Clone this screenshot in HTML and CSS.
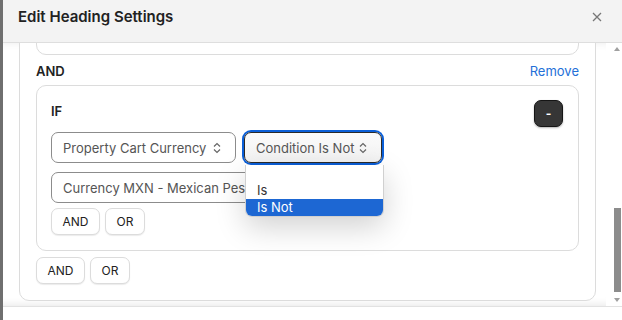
FILE: index.html
```html
<!DOCTYPE html>
<html>
  <head>
    <title>Edit Heading Settings</title>
    <link rel="stylesheet" href="styles.css">
  </head>
  <body>
    <div class="modal">
      <div class="modal-header">
        <h2 class="modal-title">Edit Heading Settings</h2>
        <button class="close-btn" aria-label="Close">
          <svg width="10" height="10" viewBox="0 0 10 10"><path d="M1 1L9 9M9 1L1 9" stroke="#777" stroke-width="1.3" fill="none"/></svg>
        </button>
      </div>

      <div class="modal-body">
        <div class="scroll-area">
          <div class="rule-group">
            <div class="prev-card"></div>

            <div class="group-head">
              <span class="label">AND</span>
              <a class="link">Remove</a>
            </div>

            <div class="condition-card">
              <div class="cond-head">
                <span class="label if-label">IF</span>
                <button class="btn-dark">-</button>
              </div>

              <div class="field-row">
                <div class="select select-property">
                  <span class="select-text">Property Cart Currency</span>
                  <svg class="chevron" width="8" height="12" viewBox="0 0 8 12"><path d="M1 4.5L4 1.5L7 4.5M1 7.5L4 10.5L7 7.5" stroke="#666" stroke-width="1.2" fill="none"/></svg>
                </div>
                <div class="select select-condition is-open">
                  <span class="select-text">Condition Is Not</span>
                  <svg class="chevron" width="8" height="12" viewBox="0 0 8 12"><path d="M1 4.5L4 1.5L7 4.5M1 7.5L4 10.5L7 7.5" stroke="#666" stroke-width="1.2" fill="none"/></svg>
                  <div class="dropdown">
                    <div class="option"></div>
                    <div class="option">Is</div>
                    <div class="option selected">Is Not</div>
                  </div>
                </div>
              </div>

              <div class="field-row">
                <div class="select select-value">
                  <span class="select-text">Currency MXN - Mexican Peso</span>
                </div>
              </div>

              <div class="btn-row">
                <button class="button">AND</button>
                <button class="button">OR</button>
              </div>
            </div>

            <div class="btn-row outer-row">
              <button class="button">AND</button>
              <button class="button">OR</button>
            </div>
          </div>
        </div>

        <div class="scrollbar">
          <span class="arrow up"></span>
          <div class="thumb"></div>
          <span class="arrow down"></span>
        </div>
      </div>

      <div class="modal-footer"></div>
    </div>
  </body>
</html>
```

FILE: styles.css
```css
:root {
  --border: #dcdcdc;
  --text-primary: #222222;
  --text-secondary: #555555;
  --link: #2470d8;
  --focus: #0b5fd8;
  --highlight: #1d67d3;
}

html, body {
  margin: 0;
  height: 320px;
  overflow: hidden;
}

body {
  background: #6f6f6f;
  font-family: 'Inter', sans-serif;
  color: var(--text-primary);
}

.modal {
  margin-left: 3px;
  height: 320px;
  background: #ffffff;
  display: flex;
  flex-direction: column;
}

.modal-header {
  height: 43px;
  box-sizing: border-box;
  flex: none;
  display: flex;
  align-items: flex-start;
  justify-content: space-between;
  padding: 8px 20px 0 15px;
  background: #f3f3f3;
  border-bottom: 1px solid #dedede;
}

.modal-title {
  margin: 0;
  font-size: 15px;
  line-height: 18px;
  font-weight: 600;
  color: var(--text-primary);
}

.close-btn {
  border: none;
  background: none;
  padding: 0;
  margin-top: 4px;
  display: flex;
  cursor: pointer;
}

.modal-body {
  height: 263px;
  flex: none;
  display: flex;
}

.scroll-area {
  flex: 1;
  overflow: hidden;
  padding: 0 10px 0 16px;
  box-shadow: inset 0 8px 8px -8px rgba(0, 0, 0, 0.08), inset 0 -10px 10px -10px rgba(0, 0, 0, 0.12);
}

.rule-group {
  margin-top: -42px;
  padding: 16px;
  border: 1px solid var(--border);
  border-radius: 10px;
  background: #ffffff;
}

.prev-card {
  height: 35px;
  border: 1px solid var(--border);
  border-radius: 10px;
}

.group-head {
  display: flex;
  justify-content: space-between;
  align-items: center;
  margin: 8px 0 6px;
  line-height: 16px;
}

.label {
  font-size: 13px;
  font-weight: 600;
}

.link {
  font-size: 13px;
  color: var(--link);
  cursor: pointer;
}

.condition-card {
  border: 1px solid var(--border);
  border-radius: 10px;
  padding: 14px 15px 15px 14px;
}

.cond-head {
  display: flex;
  justify-content: space-between;
  align-items: flex-start;
}

.if-label {
  padding-top: 3px;
  line-height: 16px;
}

.btn-dark {
  width: 29px;
  height: 27px;
  border-radius: 7px;
  border: 1px solid #151515;
  background: #363636;
  color: #ffffff;
  font-family: 'Inter', sans-serif;
  font-size: 12px;
  font-weight: 700;
  padding: 0;
  box-shadow: 0 1px 2px rgba(0, 0, 0, 0.3);
}

.field-row {
  display: flex;
  gap: 8px;
  margin-top: 5px;
}

.field-row + .field-row {
  margin-top: 9px;
}

.select {
  position: relative;
  height: 31px;
  box-sizing: border-box;
  display: flex;
  align-items: center;
  justify-content: space-between;
  padding: 0 14px 0 11px;
  border: 1px solid #8c8c8c;
  border-radius: 7px;
  background: #ffffff;
  font-size: 13px;
  color: var(--text-secondary);
  white-space: nowrap;
}

.select-property {
  width: 185px;
}

.select-condition {
  width: 138px;
  border-color: #2a2a2a;
  background: linear-gradient(#fbfbfb, #f2f2f2);
  box-shadow: 0 0 0 2px var(--focus);
}

.select-value {
  width: 300px;
}

.dropdown {
  position: absolute;
  top: 32px;
  left: 0;
  width: 137px;
  background: #ffffff;
  border: 1px solid #d0d0d0;
  border-top: none;
  border-radius: 0 0 7px 7px;
  overflow: hidden;
  box-shadow: 0 10px 30px rgba(0, 0, 0, 0.18);
  z-index: 2;
}

.option {
  height: 17px;
  line-height: 17px;
  padding-left: 11px;
  font-size: 13px;
  color: #333333;
}

.option.selected {
  background: var(--highlight);
  color: #ffffff;
}

.btn-row {
  display: flex;
  gap: 5px;
  margin-top: 5px;
}

.outer-row {
  margin-top: 6px;
}

.button {
  height: 27px;
  padding: 0 10px;
  min-width: 40px;
  border: 1px solid var(--border);
  border-radius: 7px;
  background: #ffffff;
  font-family: 'Inter', sans-serif;
  font-size: 12px;
  color: var(--text-primary);
  box-shadow: 0 1px 1px rgba(0, 0, 0, 0.08);
}

.button:first-child {
  width: 49px;
}

.scrollbar {
  width: 16px;
  flex: none;
  position: relative;
  background: #ffffff;
}

.thumb {
  position: absolute;
  left: 8px;
  top: 165px;
  width: 7px;
  height: 84px;
  background: #8c8c8c;
}

.arrow {
  position: absolute;
  left: 8px;
  width: 0;
  height: 0;
  border-left: 3px solid transparent;
  border-right: 3px solid transparent;
}

.arrow.up {
  top: 4px;
  border-bottom: 4px solid #a0a0a0;
}

.arrow.down {
  bottom: 4px;
  border-top: 4px solid #a0a0a0;
}

.modal-footer {
  flex: 1;
  border-top: 1px solid #e2e2e2;
  background: #ffffff;
}
```
